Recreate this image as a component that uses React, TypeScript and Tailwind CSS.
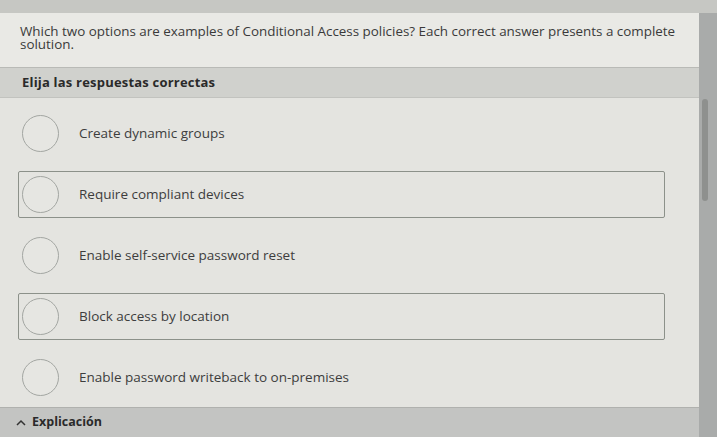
import React from "react";

const options = [
  { text: "Create dynamic groups", boxed: false },
  { text: "Require compliant devices", boxed: true },
  { text: "Enable self-service password reset", boxed: false },
  { text: "Block access by location", boxed: true },
  { text: "Enable password writeback to on-premises", boxed: false },
];

export default function App() {
  return (
    <div
      className="w-[717px] h-[437px] overflow-hidden flex flex-col bg-[#c8c9c5] text-[#3b3b3b]"
      style={{ fontFamily: '"Open Sans", "Noto Sans", sans-serif' }}
    >
      <div className="h-[13px] shrink-0 bg-[#c6c7c3]" />
      <div className="flex flex-1 min-h-0">
        <div className="flex-1 flex flex-col bg-[#e4e4e0]">
          <div className="h-[55px] shrink-0 bg-[#e9e9e5] pl-[20px] pr-[8px] pt-[12px] text-[13.4px] leading-[13px] text-[#3a3a3a] border-b border-[#b9bab6]">
            Which two options are examples of Conditional Access policies? Each correct answer presents a complete solution.
          </div>
          <div className="h-[30px] shrink-0 bg-[#d0d1cd] px-[22px] flex items-center text-[13px] tracking-[0.2px] font-bold text-[#2a2a2a] border-b border-[#c2c3bf]">
            Elija las respuestas correctas
          </div>
          <div className="flex-1 flex flex-col gap-[14px] pt-[12px] pl-[18px] pr-[34px]">
            {options.map((o) => (
              <div
                key={o.text}
                className={
                  "h-[47px] shrink-0 flex items-center rounded-[2px] border " +
                  (o.boxed ? "border-[#8c918a]" : "border-transparent")
                }
              >
                <div className="ml-[3px] w-[37px] h-[37px] rounded-full border-[1.5px] border-[#a3a6a2] bg-[#e6e6e2] shrink-0" />
                <span className="ml-[20px] text-[13.5px] text-[#3d3d3d]">{o.text}</span>
              </div>
            ))}
          </div>
          <div className="h-[30px] shrink-0 bg-[#c3c4c2] border-t border-[#b0b1ae] px-[16px] flex items-center gap-[6px] text-[12.5px] font-bold text-[#2a2a2a]">
            <svg width="10" height="8" viewBox="0 0 10 8">
              <path d="M1 6 L5 2 L9 6" fill="none" stroke="#333" strokeWidth="1.5" />
            </svg>
            Explicación
          </div>
        </div>
        <div className="w-[18px] shrink-0 bg-[#a9abaa] flex flex-col items-start pl-[3px]">
          <div className="mt-[86px] w-[6px] h-[102px] rounded-[3px] bg-[#8e908e]" />
        </div>
      </div>
    </div>
  );
}
